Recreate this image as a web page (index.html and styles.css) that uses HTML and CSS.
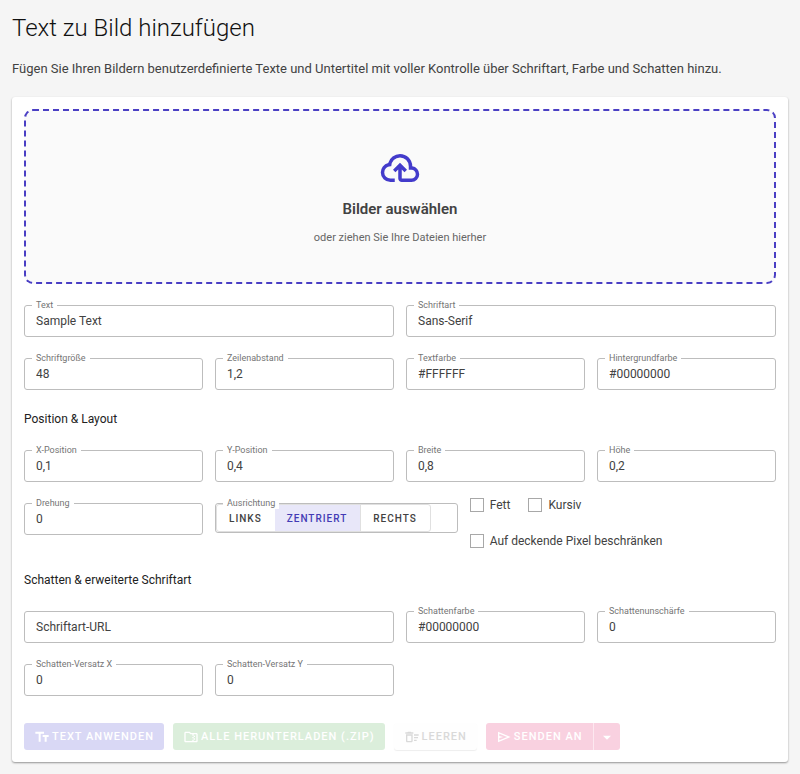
FILE: index.html
```html
<!DOCTYPE html>
<html lang="de">
<head>
    <meta charset="UTF-8">
    <meta name="viewport" content="width=device-width, initial-scale=1.0">
    <title>Text zu Bild hinzufügen</title>
    <link rel="stylesheet" href="styles.css">
</head>
<body>

    <h1>Text zu Bild hinzufügen</h1>
    <p class="intro">Fügen Sie Ihren Bildern benutzerdefinierte Texte und Untertitel mit voller Kontrolle über Schriftart, Farbe und Schatten hinzu.</p>

    <form class="card">
        <button type="button" class="dropzone">
            <svg class="cloud" viewBox="0 0 24 24"><path d="M6.5 20Q4.22 20 2.61 18.43 1 16.85 1 14.58 1 12.63 2.17 11.1 3.35 9.57 5.25 9.15 5.88 6.85 7.75 5.43 9.63 4 12 4 14.93 4 16.96 6.04 19 8.07 19 11 20.73 11.2 21.86 12.5 23 13.78 23 15.5 23 17.38 21.69 18.69 20.38 20 18.5 20H13Q12.18 20 11.59 19.41 11 18.83 11 18V12.85L9.4 14.4 8 13 12 9 16 13 14.6 14.4 13 12.85V18H18.5Q19.55 18 20.27 17.27 21 16.55 21 15.5 21 14.45 20.27 13.73 19.55 13 18.5 13H17V11Q17 8.93 15.54 7.46 14.08 6 12 6 9.93 6 8.46 7.46 7 8.93 7 11H6.5Q5.05 11 4.03 12.03 3 13.05 3 14.5 3 15.95 4.03 17 5.05 18 6.5 18H9V20Z"/></svg>
            <span class="dropzone-title">Bilder auswählen</span>
            <span class="dropzone-hint">oder ziehen Sie Ihre Dateien hierher</span>
        </button>

        <div class="grid">
            <div class="field wide">
                <label for="text">Text</label>
                <input type="text" id="text" value="Sample Text">
            </div>
            <div class="field wide">
                <label for="font">Schriftart</label>
                <input type="text" id="font" value="Sans-Serif">
            </div>
            <div class="field">
                <label for="size">Schriftgröße</label>
                <input type="text" id="size" value="48">
            </div>
            <div class="field">
                <label for="lineheight">Zeilenabstand</label>
                <input type="text" id="lineheight" value="1,2">
            </div>
            <div class="field">
                <label for="color">Textfarbe</label>
                <input type="text" id="color" value="#FFFFFF">
            </div>
            <div class="field">
                <label for="background">Hintergrundfarbe</label>
                <input type="text" id="background" value="#00000000">
            </div>
        </div>

        <h2>Position &amp; Layout</h2>
        <div class="grid">
            <div class="field">
                <label for="posx">X-Position</label>
                <input type="text" id="posx" value="0,1">
            </div>
            <div class="field">
                <label for="posy">Y-Position</label>
                <input type="text" id="posy" value="0,4">
            </div>
            <div class="field">
                <label for="width">Breite</label>
                <input type="text" id="width" value="0,8">
            </div>
            <div class="field">
                <label for="height">Höhe</label>
                <input type="text" id="height" value="0,2">
            </div>
            <div class="field">
                <label for="rotation">Drehung</label>
                <input type="text" id="rotation" value="0">
            </div>
            <div class="field align">
                <span class="caption" id="align-label">Ausrichtung</span>
                <div class="align-box" role="group" aria-labelledby="align-label">
                    <div class="toggle">
                        <button type="button">LINKS</button>
                        <button type="button" class="active">ZENTRIERT</button>
                        <button type="button">RECHTS</button>
                    </div>
                </div>
            </div>
            <div class="checks">
                <label><input type="checkbox">Fett</label>
                <label><input type="checkbox">Kursiv</label>
                <label><input type="checkbox">Auf deckende Pixel beschränken</label>
            </div>
        </div>

        <h2>Schatten &amp; erweiterte Schriftart</h2>
        <div class="grid">
            <div class="field wide">
                <input type="text" id="fonturl" placeholder="Schriftart-URL" aria-label="Schriftart-URL">
            </div>
            <div class="field">
                <label for="shadowcolor">Schattenfarbe</label>
                <input type="text" id="shadowcolor" value="#00000000">
            </div>
            <div class="field">
                <label for="shadowblur">Schattenunschärfe</label>
                <input type="text" id="shadowblur" value="0">
            </div>
            <div class="field">
                <label for="shadowx">Schatten-Versatz X</label>
                <input type="text" id="shadowx" value="0">
            </div>
            <div class="field">
                <label for="shadowy">Schatten-Versatz Y</label>
                <input type="text" id="shadowy" value="0">
            </div>
        </div>

        <div class="actions">
            <button type="button" class="btn primary" disabled>
                <svg viewBox="0 0 24 24"><path d="M2 4V7H7V19H10V7H15V4H2M22 9H13V12H16V19H19V12H22V9Z"/></svg>
                TEXT ANWENDEN
            </button>
            <button type="button" class="btn success" disabled>
                <svg viewBox="0 0 24 24"><path d="M20 6H12L10 4H4C2.9 4 2 4.9 2 6V18C2 19.1 2.9 20 4 20H20C21.1 20 22 19.1 22 18V8C22 6.9 21.1 6 20 6M16 16H14V18H4V6H9.2L11.2 8H14V10H16V12H14V14H16V16M20 18H16V16H18V14H16V12H18V10H16V8H20V18Z"/></svg>
                ALLE HERUNTERLADEN (.ZIP)
            </button>
            <button type="button" class="btn plain" disabled>
                <svg viewBox="0 0 24 24"><path d="M15 16H19V18H15V16M15 8H22V10H15V8M15 12H21V14H15V12M11 10V18H5V10H11M13 8H3V18C3 19.1 3.9 20 5 20H11C12.1 20 13 19.1 13 18V8M14 5H11L10 4H6L5 5H2V7H14V5Z"/></svg>
                LEEREN
            </button>
            <div class="split">
                <button type="button" class="btn pink" disabled>
                    <svg viewBox="0 0 24 24"><path fill-rule="evenodd" d="M3 20V4L22 12L3 20ZM5 17L16.85 12L5 7V10.5L11 12L5 13.5V17Z"/></svg>
                    SENDEN AN
                </button>
                <button type="button" class="btn pink arrow" aria-label="Ziel auswählen" disabled>
                    <svg viewBox="0 0 24 24"><path d="M6 10L12 16L18 10H6Z"/></svg>
                </button>
            </div>
        </div>
    </form>

</body>
</html>
```
FILE: styles.css
```css
* {
    box-sizing: border-box;
}

body {
    margin: 0;
    padding: 12px;
    background-color: #f5f5f5;
    color: #424242;
    font-family: Roboto, sans-serif;
    font-size: 12px;
}

button, input {
    font-family: inherit;
    font-size: inherit;
    color: inherit;
}

h1 {
    margin: 0;
    color: #111;
    font-size: 24px;
    font-weight: 300;
    line-height: 32px;
}

.intro {
    margin: 15px 0 18px;
    font-size: 13px;
    line-height: 20px;
}

.card {
    padding: 12px;
    background-color: #fff;
    border-radius: 3px;
    box-shadow: 0 1px 2px rgba(0, 0, 0, 0.4);
}

.dropzone {
    display: flex;
    flex-direction: column;
    align-items: center;
    gap: 10px;
    width: 100%;
    padding: 36px 12px;
    background-color: #fafafa;
    border: 2px dashed #4a3fc4;
    border-radius: 9px;
    cursor: pointer;
}

.cloud {
    width: 42px;
    height: 42px;
    fill: #433bcb;
}

.dropzone-title {
    font-size: 15px;
    font-weight: 600;
    line-height: 20px;
}

.dropzone-hint {
    color: #666;
    font-size: 11px;
    line-height: 17px;
}

.grid {
    display: grid;
    grid-template-columns: repeat(12, minmax(0, 1fr));
    gap: 13px 12px;
    margin-top: 13px;
}

.field {
    position: relative;
    grid-column: span 3;
    padding-top: 8px;
}

.field.wide {
    grid-column: span 6;
}

.field.align {
    grid-column: span 4;
}

/* caption sits on top of the field border */
.field label, .caption {
    position: absolute;
    z-index: 1;
    top: 2px;
    left: 8px;
    padding: 0 4px;
    background-color: #fff;
    color: #757575;
    font-size: 9px;
    line-height: 12px;
}

.field input {
    display: block;
    width: 100%;
    height: 32px;
    padding: 0 11px;
    background-color: #fff;
    border: 1px solid #bdbdbd;
    border-radius: 3px;
}

.field input::placeholder {
    color: #424242;
    opacity: 1;
}

h2 {
    margin: 19px 0 0;
    color: #212121;
    font-size: 12px;
    font-weight: 400;
    line-height: 20px;
}

.align-box {
    height: 30px;
    border: 1px solid #bdbdbd;
    border-radius: 3px;
}

.toggle {
    display: flex;
    width: fit-content;
    height: 28px;
    border: 1px solid #e0e0e0;
    border-radius: 3px;
}

.toggle button {
    padding: 0 13px 0 12px;
    background: none;
    border: 0;
    font-size: 10px;
    font-weight: 500;
    letter-spacing: 1px;
    cursor: pointer;
}

.toggle .active {
    background-color: #e8e7f9;
    border-right: 1px solid #e0e0e0;
    color: #433bb5;
}

.checks {
    display: flex;
    grid-column: span 5;
    flex-wrap: wrap;
    gap: 16px 18px;
}

.checks label {
    display: flex;
    align-items: center;
    gap: 6px;
    line-height: 20px;
}

.checks input {
    appearance: none;
    width: 14px;
    height: 14px;
    margin: 0;
    border: 1px solid #a8a8a8;
}

.checks input:checked {
    background-color: #433bcb;
}

.actions {
    display: flex;
    flex-wrap: wrap;
    gap: 9px;
    margin-top: 27px;
}

.btn {
    display: flex;
    align-items: center;
    gap: 2px;
    height: 27px;
    padding: 0 10px;
    border: 0;
    border-radius: 3px;
    color: #fff;
    font-size: 11px;
    font-weight: 500;
    letter-spacing: 1px;
}

.btn svg {
    width: 16px;
    height: 16px;
    fill: currentColor;
}

.primary {
    background-color: #d9d8f5;
}

.success {
    background-color: #dbeedb;
}

.plain {
    background-color: #fefefe;
    box-shadow: 0 1px 1px #eee;
    color: #d9d9d9;
}

.pink {
    background-color: #f9d1e0;
}

.split {
    display: flex;
}

.split .btn:first-child {
    border-radius: 3px 0 0 3px;
}

.split .arrow {
    padding: 0 5px;
    border-left: 1px solid #fde8f0;
    border-radius: 0 3px 3px 0;
}
```
